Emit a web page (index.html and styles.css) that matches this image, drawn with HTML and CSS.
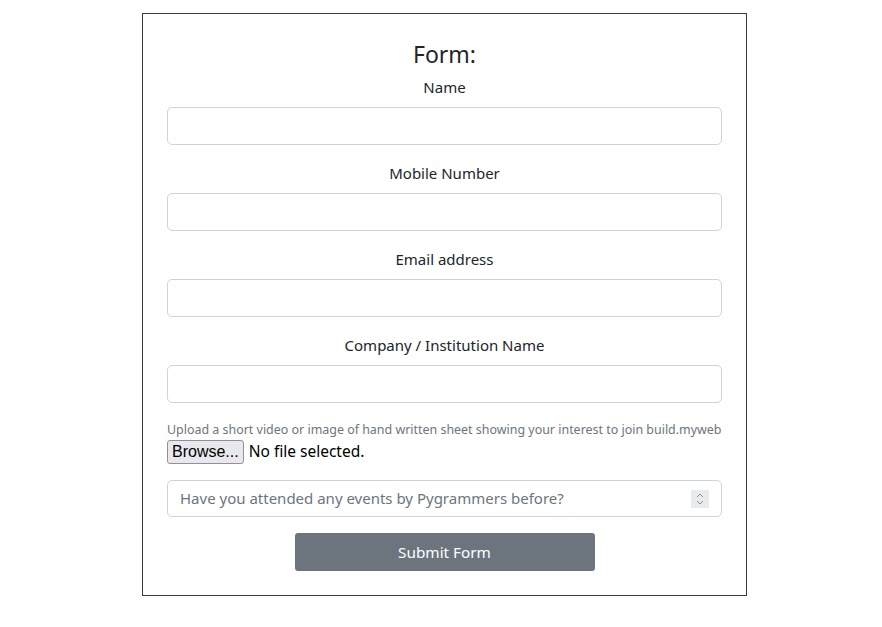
FILE: index.html
```html
<!DOCTYPE html>
<html lang="en">
<head>
<meta charset="utf-8">
<title>Form</title>
<link rel="stylesheet" href="styles.css">
</head>
<body>
<div class="page">
  <form class="card">
    <h4 class="title">Form:</h4>
    <div class="field">
      <label class="label">Name</label>
      <input class="control" type="text">
    </div>
    <div class="field">
      <label class="label">Mobile Number</label>
      <input class="control" type="text">
    </div>
    <div class="field">
      <label class="label">Email address</label>
      <input class="control" type="text">
    </div>
    <div class="field">
      <label class="label">Company / Institution Name</label>
      <input class="control" type="text">
    </div>
    <div class="upload">
      <div class="hint">Upload a short video or image of hand written sheet showing your interest to join build.myweb</div>
      <div class="file">
        <span class="browse">Browse...</span>
        <span class="nofile">No file selected.</span>
      </div>
    </div>
    <div class="select">
      <span class="placeholder">Have you attended any events by Pygrammers before?</span>
      <span class="spin">
        <svg width="8" height="14" viewBox="0 0 8 14"><path d="M1 5 L4 2 L7 5" fill="none" stroke="#8a9096" stroke-width="1"/><path d="M1 9 L4 12 L7 9" fill="none" stroke="#8a9096" stroke-width="1"/></svg>
      </span>
    </div>
    <div class="actions">
      <button type="button" class="submit">Submit Form</button>
    </div>
  </form>
</div>
</body>
</html>
```
FILE: styles.css
```css
* { box-sizing: border-box; }
html, body { margin: 0; padding: 0; background: #fff; }
body {
  font-family: "Noto Sans", "Open Sans", sans-serif;
  color: #212529;
  font-size: 16px;
  line-height: 1.5;
}
.page {
  display: flex;
  justify-content: center;
  padding-top: 13px;
  padding-left: 7px;
}
.card {
  width: 605px;
  border: 1px solid #3a3a3a;
  padding: 24px 24px 24px 24px;
  display: flex;
  flex-direction: column;
}
.title {
  margin: 0 0 6px 0;
  padding-top: 2px;
  font-size: 23px;
  font-weight: 400;
  line-height: 29px;
  text-align: center;
}
.field {
  display: flex;
  flex-direction: column;
  margin-bottom: 16px;
}
.label {
  text-align: center;
  font-size: 15px;
  line-height: 24px;
  margin-bottom: 8px;
}
.control {
  height: 38px;
  border: 1px solid #ced4da;
  border-radius: 5px;
  font: inherit;
  padding: 6px 12px;
  background: #fff;
}
.upload { display: flex; flex-direction: column; }
.hint {
  font-size: 12.45px;
  line-height: 20px;
  padding-top: 1px;
  color: #6c757d;
  white-space: nowrap;
}
.file {
  display: flex;
  align-items: center;
  gap: 5px;
  height: 24px;
  margin-bottom: 16px;
}
.browse {
  font-family: "Liberation Sans", "Noto Sans", sans-serif;
  display: inline-flex;
  align-items: center;
  height: 24px;
  padding: 0 4px;
  border: 1px solid #8f8f9d;
  border-radius: 3px;
  background: #e9e9ed;
  color: #000;
  font-size: 16px;
}
.nofile { font-size: 15.5px; color: #000; }
.select {
  height: 37px;
  border: 1px solid #ced4da;
  border-radius: 5px;
  display: flex;
  align-items: center;
  justify-content: space-between;
  padding: 0 12px 0 12px;
  margin-bottom: 16px;
}
.placeholder { color: #6c757d; font-size: 15px; }
.spin {
  width: 18px;
  height: 18px;
  background: #e9ecef;
  display: flex;
  align-items: center;
  justify-content: center;
}
.actions { display: flex; justify-content: center; }
.submit {
  width: 300px;
  height: 38px;
  border: none;
  border-radius: 3px;
  background: #6c757d;
  color: #fff;
  font: inherit;
  font-size: 15.3px;
}
```
